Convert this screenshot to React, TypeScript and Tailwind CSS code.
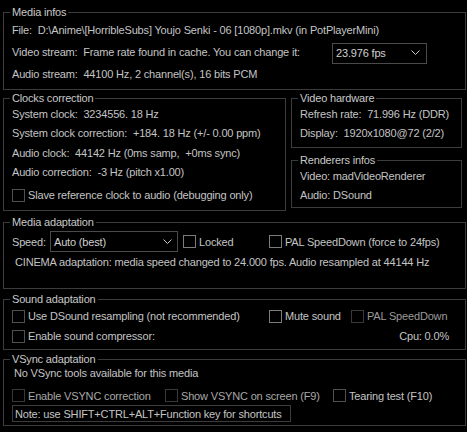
import React from "react";

function Box({ title, className = "", children }: { title: string; className?: string; children?: React.ReactNode }) {
  return (
    <fieldset className={`min-w-0 border border-[#3c3c3c] pl-[8px] pr-[8px] ${className}`}>
      <legend className="-ml-[2px] px-[2px] leading-[14px] text-[#c8c8c8]">{title}</legend>
      {children}
    </fieldset>
  );
}

function Check({ disabled = false, dim = false }: { disabled?: boolean; dim?: boolean }) {
  const c = disabled ? "border-[#383838]" : dim ? "border-[#505050]" : "border-[#7c7c7c]";
  return <span className={`inline-block w-[13px] h-[13px] shrink-0 border ${c}`} />;
}

function Chevron() {
  return (
    <svg width="9" height="6" viewBox="0 0 9 6" className="shrink-0">
      <polyline points="0.5,0.5 4.5,4.5 8.5,0.5" fill="none" stroke="#c8c8c8" strokeWidth="1" />
    </svg>
  );
}

export default function App() {
  return (
    <div className="flex h-[432px] w-[467px] flex-col bg-black pl-[3px] pr-[1px] pt-[5px] font-['Liberation_Sans',Arial,sans-serif] text-[11px] leading-[14px] tracking-[-0.17px] text-[#c4c4c4]">
      <Box title="Media infos" className="pb-[4px]">
        <div className="flex h-[22px] items-center whitespace-pre">File:  D:\Anime\[HorribleSubs] Youjo Senki - 06 [1080p].mkv (in PotPlayerMini)</div>
        <div className="flex h-[22px] items-center">
          <span className="w-[320px] whitespace-pre">Video stream:  Frame rate found in cache. You can change it:</span>
          <div className="mt-[2px] flex h-[21px] w-[95px] items-center justify-between border border-[#4a4a4a] pl-[3px] pr-[6px] text-[#d0d0d0]">
            <span>23.976 fps</span>
            <Chevron />
          </div>
        </div>
        <div className="flex h-[22px] items-center whitespace-pre">Audio stream:  44100 Hz, 2 channel(s), 16 bits PCM</div>
      </Box>

      <div className="mt-[1px] flex gap-[5px]">
        <Box title="Clocks correction" className="w-[283px] pb-[2px]">
          <div className="flex h-[18px] items-center whitespace-pre">System clock:  3234556. 18 Hz</div>
          <div className="flex h-[20px] items-center whitespace-pre">System clock correction:  +184. 18 Hz (+/- 0.00 ppm)</div>
          <div className="flex h-[19px] items-center whitespace-pre">Audio clock:  44142 Hz (0ms samp,  +0ms sync)</div>
          <div className="flex h-[20px] items-center whitespace-pre">Audio correction:  -3 Hz (pitch x1.00)</div>
          <div className="flex h-[26px] items-center gap-[3px]">
            <Check dim />
            <span>Slave reference clock to audio (debugging only)</span>
          </div>
        </Box>
        <div className="flex w-[171px] flex-col">
          <Box title="Video hardware" className="pb-[4px]">
            <div className="flex h-[18px] items-center whitespace-pre">Refresh rate:  71.996 Hz (DDR)</div>
            <div className="flex h-[20px] items-center whitespace-pre">Display:  1920x1080@72 (2/2)</div>
          </Box>
          <Box title="Renderers infos" className="mt-[5px] pb-[3px]">
            <div className="flex h-[18px] items-center">Video: madVideoRenderer</div>
            <div className="flex h-[19px] items-center">Audio: DSound</div>
          </Box>
        </div>
      </div>

      <Box title="Media adaptation" className="mt-[4px] pb-[16px] pt-[2px]">
        <div className="flex h-[21px] items-center">
          <span className="w-[38px]">Speed:</span>
          <div className="flex h-[21px] w-[128px] items-center justify-between border border-[#4a4a4a] pl-[3px] pr-[5px] text-[#d0d0d0]">
            <span>Auto (best)</span>
            <Chevron />
          </div>
          <span className="ml-[5px] flex"><Check /></span>
          <span className="ml-[3px] w-[70px]">Locked</span>
          <Check />
          <span className="ml-[3px]">PAL SpeedDown (force to 24fps)</span>
        </div>
        <div className="flex h-[20px] items-center whitespace-nowrap pl-[3px]">CINEMA adaptation: media speed changed to 24.000 fps. Audio resampled at 44144 Hz</div>
      </Box>

      <Box title="Sound adaptation" className="mt-[3px] pb-[3px]">
        <div className="flex h-[20px] items-center">
          <Check dim />
          <span className="ml-[3px] w-[241px]">Use DSound resampling (not recommended)</span>
          <Check />
          <span className="ml-[3px] w-[66px]">Mute sound</span>
          <Check disabled />
          <span className="ml-[3px] text-[#9a9a9a]">PAL SpeedDown</span>
        </div>
        <div className="flex h-[20px] items-center">
          <Check dim />
          <span className="ml-[3px] flex-1">Enable sound compressor:</span>
          <span className="mr-[8px]">Cpu: 0.0%</span>
        </div>
      </Box>

      <Box title="VSync adaptation" className="mt-[2px] pb-[3px]">
        <div className="flex h-[14px] items-center pl-[2px]">No VSync tools available for this media</div>
        <div className="flex h-[25px] items-center pt-[6px]">
          <Check disabled />
          <span className="ml-[3px] w-[137px] text-[#a8a8a8]">Enable VSYNC correction</span>
          <Check disabled />
          <span className="ml-[3px] w-[152px] text-[#a8a8a8]">Show VSYNC on screen (F9)</span>
          <Check dim />
          <span className="ml-[3px]">Tearing test (F10)</span>
        </div>
        <div className="flex">
          <div className="flex h-[17px] w-[279px] items-center whitespace-nowrap border border-[#3c3c3c] pl-[2px]">Note: use SHIFT+CTRL+ALT+Function key for shortcuts</div>
        </div>
      </Box>
    </div>
  );
}
